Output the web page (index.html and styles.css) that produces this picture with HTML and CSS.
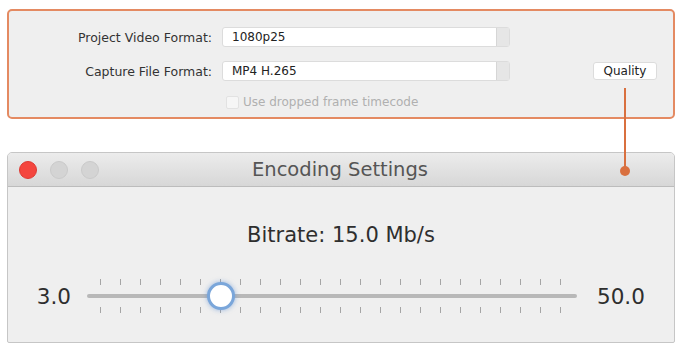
FILE: index.html
```html
<!DOCTYPE html>
<html lang="en">
<head>
    <meta charset="UTF-8">
    <title>Encoding Settings</title>
    <link rel="stylesheet" href="styles.css">
</head>
<body>
<div class="stage">
    <div class="format-panel">
        <div class="form-row">
            <label class="form-label">Project Video Format:</label>
            <div class="select"><span>1080p25</span><i class="stepper"></i></div>
        </div>
        <div class="form-row">
            <label class="form-label">Capture File Format:</label>
            <div class="select"><span>MP4 H.265</span><i class="stepper"></i></div>
            <button class="quality-btn">Quality</button>
        </div>
        <div class="form-row check-row">
            <span class="form-label"></span>
            <span class="checkbox"></span>
            <span class="check-text">Use dropped frame timecode</span>
        </div>
    </div>

    <div class="window">
        <div class="titlebar">
            <div class="lights">
                <span class="light red"></span>
                <span class="light"></span>
                <span class="light"></span>
            </div>
            <div class="title">Encoding Settings</div>
        </div>
        <div class="window-body">
            <div class="bitrate">Bitrate: 15.0 Mb/s</div>
            <div class="slider-row">
                <span class="slider-min">3.0</span>
                <div class="slider">
                    <div class="ticks" id="ticksTop"></div>
                    <div class="track"></div>
                    <div class="ticks" id="ticksBottom"></div>
                    <div class="thumb"></div>
                </div>
                <span class="slider-max">50.0</span>
            </div>
        </div>
    </div>

    <div class="connector"></div>
    <div class="connector-dot"></div>
</div>
<script>
    ['ticksTop', 'ticksBottom'].forEach(function (id) {
        const row = document.getElementById(id);
        for (let i = 0; i < 24; i++) {
            const t = document.createElement('span');
            t.className = 'tick';
            row.appendChild(t);
        }
    });
</script>
</body>
</html>
```

FILE: styles.css
```css
body {
    margin: 0;
    background-color: #fff;
    font-family: "DejaVu Sans", "Liberation Sans", sans-serif;
    color: #333;
}
.stage {
    position: relative;
    width: 679px;
    height: 348px;
    padding-top: 9px;
    box-sizing: border-box;
}
.format-panel {
    margin-left: 7px;
    width: 668px;
    height: 110px;
    box-sizing: border-box;
    border: 2px solid #e48a62;
    border-radius: 5px;
    background-color: #efefef;
    padding-top: 16px;
    display: flex;
    flex-direction: column;
    gap: 14px;
}
.form-row {
    display: flex;
    align-items: center;
    height: 20px;
}
.form-label {
    width: 203px;
    margin-right: 10px;
    text-align: right;
    font-size: 12.5px;
    color: #333;
}
.select {
    width: 288px;
    height: 20px;
    box-sizing: border-box;
    background-color: #fff;
    border: 1px solid #dcdcdc;
    border-radius: 3px;
    display: flex;
    align-items: center;
    justify-content: space-between;
    font-size: 12px;
    color: #222;
}
.select span {
    padding-left: 9px;
}
.stepper {
    width: 12px;
    height: 18px;
    background-color: #e6e6e6;
    border-left: 1px solid #d6d6d6;
}
.quality-btn {
    margin-left: 83px;
    width: 64px;
    height: 18px;
    padding: 0;
    border: 1px solid #dcdcdc;
    border-radius: 3px;
    background-color: #fff;
    font-family: inherit;
    font-size: 12px;
    color: #222;
}
.check-row {
    height: 14px;
}
.checkbox {
    width: 11px;
    height: 11px;
    margin-left: 4px;
    border: 1px solid #e2e2e2;
    border-radius: 2px;
    background-color: #f6f6f6;
}
.check-text {
    margin-left: 4px;
    font-size: 12px;
    color: #b0b0b0;
}

.window {
    margin: 33px 0 0 7px;
    width: 668px;
    height: 191px;
    box-sizing: border-box;
    border: 1px solid #c6c6c6;
    border-radius: 5px 5px 2px 2px;
    background-color: #efefef;
    overflow: hidden;
}
.titlebar {
    height: 33px;
    display: flex;
    align-items: center;
    background: linear-gradient(#ececec, #d7d7d7);
    border-bottom: 1px solid #bcbcbc;
}
.lights {
    display: flex;
    gap: 13px;
    padding-left: 11px;
}
.light {
    width: 18px;
    height: 18px;
    border-radius: 50%;
    background-color: #d4d4d4;
    border: 1px solid #cacaca;
    box-sizing: border-box;
}
.light.red {
    background-color: #f4463e;
    border-color: #de3a33;
}
.title {
    flex: 1;
    text-align: center;
    margin-right: 93px;
    font-size: 19.5px;
    color: #555;
}
.window-body {
    display: flex;
    flex-direction: column;
    align-items: center;
    padding-top: 36px;
}
.bitrate {
    font-size: 21px;
    line-height: 24px;
    color: #2e2e2e;
}
.slider-row {
    margin-top: 32px;
    width: 100%;
    display: flex;
    align-items: center;
}
.slider-min {
    width: 63px;
    text-align: right;
    font-size: 21.5px;
    color: #2e2e2e;
}
.slider-max {
    margin-left: 20px;
    font-size: 21.5px;
    color: #2e2e2e;
}
.slider {
    position: relative;
    width: 490px;
    margin-left: 16px;
    display: flex;
    flex-direction: column;
    gap: 9px;
}
.ticks {
    display: flex;
    justify-content: space-between;
    padding: 0 16px 0 13px;
}
.tick {
    width: 1px;
    height: 6px;
    background-color: #a5a5a5;
}
.track {
    height: 4px;
    border-radius: 2px;
    background-color: #b8b8b8;
}
.thumb {
    position: absolute;
    left: 120px;
    top: 50%;
    width: 22px;
    height: 22px;
    margin-top: -14px;
    border-radius: 50%;
    background-color: #fff;
    border: 3px solid #7aa6da;
    box-shadow: 0 0 5px rgba(90, 140, 210, 0.6);
}

.connector {
    position: absolute;
    left: 624px;
    top: 88px;
    width: 2px;
    height: 83px;
    background-color: #d9703f;
}
.connector-dot {
    position: absolute;
    left: 620px;
    top: 166px;
    width: 10px;
    height: 10px;
    border-radius: 50%;
    background-color: #d9703f;
}
```
